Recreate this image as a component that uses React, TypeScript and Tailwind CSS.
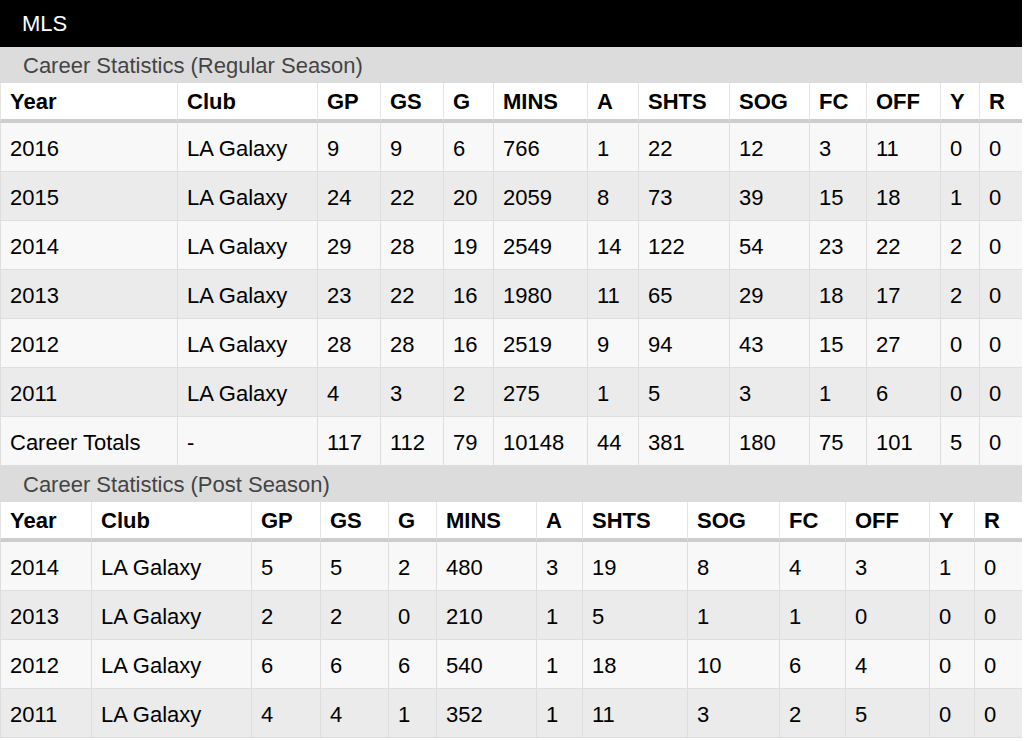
import React from "react";

const headers = ["Year", "Club", "GP", "GS", "G", "MINS", "A", "SHTS", "SOG", "FC", "OFF", "Y", "R"];

const regular: string[][] = [
  ["2016", "LA Galaxy", "9", "9", "6", "766", "1", "22", "12", "3", "11", "0", "0"],
  ["2015", "LA Galaxy", "24", "22", "20", "2059", "8", "73", "39", "15", "18", "1", "0"],
  ["2014", "LA Galaxy", "29", "28", "19", "2549", "14", "122", "54", "23", "22", "2", "0"],
  ["2013", "LA Galaxy", "23", "22", "16", "1980", "11", "65", "29", "18", "17", "2", "0"],
  ["2012", "LA Galaxy", "28", "28", "16", "2519", "9", "94", "43", "15", "27", "0", "0"],
  ["2011", "LA Galaxy", "4", "3", "2", "275", "1", "5", "3", "1", "6", "0", "0"],
  ["Career Totals", "-", "117", "112", "79", "10148", "44", "381", "180", "75", "101", "5", "0"],
];

const post: string[][] = [
  ["2014", "LA Galaxy", "5", "5", "2", "480", "3", "19", "8", "4", "3", "1", "0"],
  ["2013", "LA Galaxy", "2", "2", "0", "210", "1", "5", "1", "1", "0", "0", "0"],
  ["2012", "LA Galaxy", "6", "6", "6", "540", "1", "18", "10", "6", "4", "0", "0"],
  ["2011", "LA Galaxy", "4", "4", "1", "352", "1", "11", "3", "2", "5", "0", "0"],
];

function StatsTable({ title, rows, cols }: { title: string; rows: string[][]; cols: string }) {
  return (
    <div>
      <div className="h-[36px] bg-[#dcdcdc] flex items-center pl-[23px] pt-[1px] text-[22px] text-[#444]">{title}</div>
      <div className={`grid ${cols}`}>
        {headers.map((h) => (
          <div
            key={h}
            className="h-[40px] bg-white border-l border-[#e4e4e4] border-b-4 border-b-[#cdcdcd] flex items-center pl-[9px] font-bold text-[22px] text-black"
          >
            {h}
          </div>
        ))}
        {rows.map((r, i) =>
          r.map((c, j) => (
            <div
              key={`${i}-${j}`}
              className={`h-[49px] border-l border-b border-[#dedede] flex items-center pl-[9px] pt-[3px] text-[22px] text-black whitespace-nowrap ${
                i % 2 === 0 ? "bg-[#f8f8f8]" : "bg-[#ebebeb]"
              }`}
            >
              {c}
            </div>
          ))
        )}
      </div>
    </div>
  );
}

export default function App() {
  return (
    <div className="w-[1024px] h-[741px] bg-white overflow-hidden" style={{ fontFamily: '"Liberation Sans", Arial, sans-serif' }}>
      <div className="w-[1022px]">
        <div className="h-[47px] bg-black flex items-center pl-[22px] text-white text-[22px]">MLS</div>
        <StatsTable
          title="Career Statistics (Regular Season)"
          rows={regular}
          cols="grid-cols-[177px_140px_63px_63px_50px_94px_51px_91px_80px_57px_74px_39px_43px]"
        />
        <StatsTable
          title="Career Statistics (Post Season)"
          rows={post}
          cols="grid-cols-[91px_160px_69px_68px_48px_100px_46px_105px_92px_66px_84px_45px_48px]"
        />
      </div>
    </div>
  );
}
